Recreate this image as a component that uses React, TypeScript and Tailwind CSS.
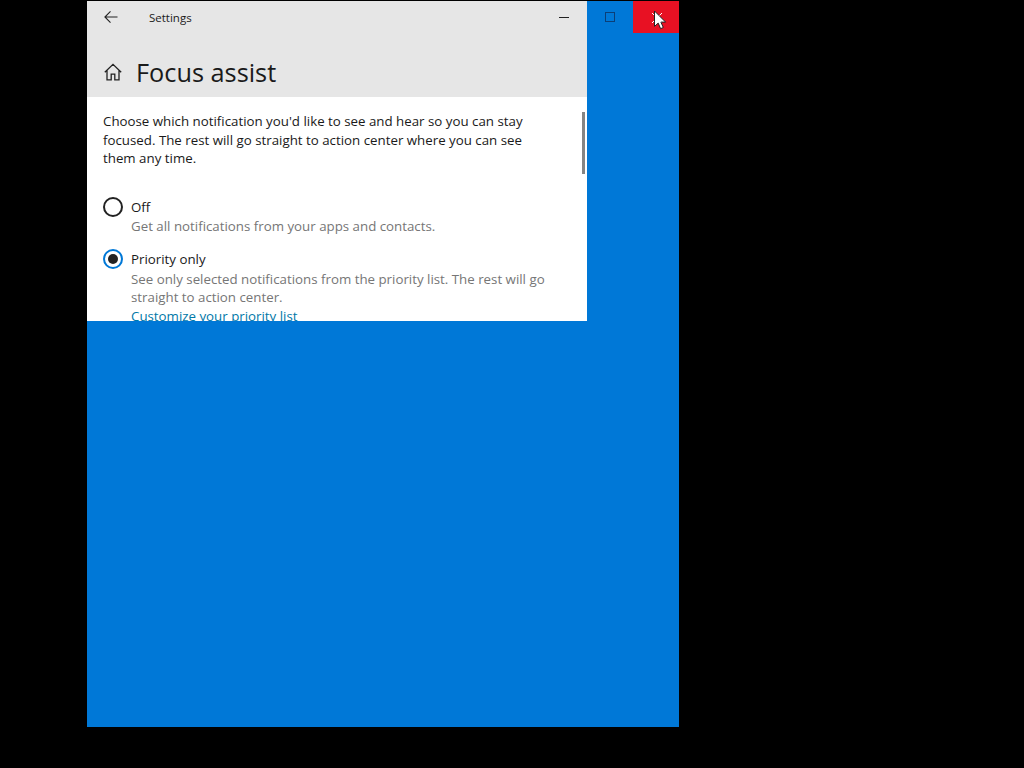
import React from 'react';

function CloseGlyphAndCursor() {
  return (
    <svg className="absolute left-[18px] top-[9px]" width="16" height="21" viewBox="0 0 16 21">
      <path d="M1 3l10 10M11 3 1 13" stroke="#fff" strokeWidth="1" fill="none" />
      <path d="M3.5 1v15.4l3.7-3.3 2.4 5.6 2.7-1.2-2.4-5.4h4.7z" fill="#fff" stroke="#222" strokeWidth="1" />
    </svg>
  );
}

export default function App() {
  return (
    <div className="h-[768px] w-[1024px] overflow-hidden bg-black pl-[87px] pt-px font-['Open_Sans',sans-serif] text-[#1a1a1a]">
      <div className="flex h-[726px] w-[592px] items-start bg-[#0078d7]">
        {/* Settings window content */}
        <div className="w-[500px] bg-white">
          <div className="h-[96px] bg-[#e6e6e6]">
            <div className="flex h-[32px] items-center">
              <svg className="ml-[17px]" width="14" height="14" viewBox="0 0 14 14" fill="none" stroke="#222" strokeWidth="1.1">
                <path d="M13.5 7H1M6.5 1.3 0.9 7l5.6 5.7" />
              </svg>
              <span className="ml-[31px] mt-[2px] text-[11.5px] leading-none">Settings</span>
              <span className="ml-[367px] h-px w-[10px] bg-[#222]" />
            </div>
            <div className="mt-[22px] flex items-center">
              <svg className="ml-[17px]" width="18" height="18" viewBox="0 0 18 18" fill="none" stroke="#222" strokeWidth="1.3">
                <path d="M0.8 9.2 9 1.4l8.2 7.8M3 7.2v9.6h4.2v-5.6h3.6v5.6H15V7.2" />
              </svg>
              <h1 className="ml-[14px] text-[25.3px] font-normal leading-[34px]">Focus assist</h1>
            </div>
          </div>
          <div className="relative h-[224px] overflow-hidden pl-4 pt-[15px]">
            <div className="absolute right-[2px] top-[15px] h-[62px] w-[3px] bg-[#858585]" />
            <p className="text-[13.3px] leading-[18.5px]">
              Choose which notification you'd like to see and hear so you can stay
              <br />
              focused. The rest will go straight to action center where you can see
              <br />
              them any time.
            </p>
            <div className="mt-[28px] flex items-start">
              <span className="mt-px h-5 w-5 rounded-full border-2 border-[#222]" />
              <div className="ml-2 pt-px text-[13.3px]">
                <div className="leading-[21px]">Off</div>
                <div className="-mt-px leading-[18px] text-[#767676]">Get all notifications from your apps and contacts.</div>
              </div>
            </div>
            <div className="mt-[13px] flex items-start">
              <span className="mt-px flex h-5 w-5 items-center justify-center rounded-full border-2 border-[#0078d7]">
                <span className="h-[10px] w-[10px] rounded-full bg-[#222]" />
              </span>
              <div className="ml-2 pt-px text-[13.3px]">
                <div className="leading-[21px]">Priority only</div>
                <div className="leading-[18px] text-[#767676]">
                  See only selected notifications from the priority list. The rest will go
                  <br />
                  straight to action center.
                </div>
                <div className="leading-[20px] text-[#0078a8] underline">Customize your priority list</div>
              </div>
            </div>
          </div>
        </div>
        {/* Caption buttons over the blue */}
        <div className="flex h-8 flex-1 items-center">
          <div className="flex h-full w-[46px] items-center justify-center">
            <span className="h-[10px] w-[10px] border border-[#0b3f78]" />
          </div>
          <div className="relative h-full w-[46px] bg-[#e81123]">
            <CloseGlyphAndCursor />
          </div>
        </div>
      </div>
    </div>
  );
}
